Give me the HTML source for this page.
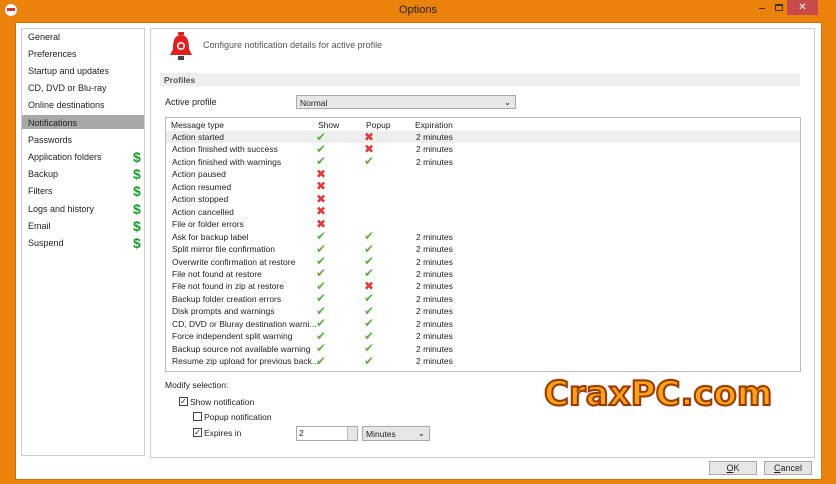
<!DOCTYPE html>
<html><head><meta charset="utf-8"><style>
*{margin:0;padding:0;box-sizing:border-box}
body{width:836px;height:484px;background:#ea820c;font-family:"Liberation Sans","DejaVu Sans",sans-serif;font-size:9px;color:#222;position:relative;overflow:hidden}
.abs{position:absolute}
.title{left:0;top:4px;width:836px;text-align:center;font-size:11px;color:#222}
.client{left:15px;top:22px;width:807px;height:458px;background:#fff;border:1px solid #d26f00}
.left{left:21px;top:28px;width:124px;height:428px;border:1px solid #ccc;background:#fff}
.left div{position:absolute;left:6px;font-size:9px}
.right{left:150px;top:28px;width:665px;height:430px;border:1px solid #ccc;background:#fff}
.left .dollar{color:#1a9a2a;font-weight:bold!important;font-size:14px!important;position:absolute;left:111px!important}
.row{position:absolute;left:172px;font-size:8.5px}
.ck{position:absolute;font-size:12px;color:#5ab33c;font-weight:bold}
.x{position:absolute;font-size:12px;color:#e03a3a;font-weight:bold}
.exp{position:absolute;left:416px;font-size:8.5px}
.cb{position:absolute;width:9px;height:9px;border:1px solid #444;background:#fff;font-size:8px;line-height:8px;text-align:center}
.btn{position:absolute;height:14px;border:1px solid #aaa;background:#e6e6e6;text-align:center;font-size:9px;line-height:12px}
</style></head><body>
<div class="abs" style="left:5px;top:4px;width:12px;height:12px;border-radius:6px;background:#fff"></div>
<div class="abs" style="left:7px;top:8px;width:8px;height:3px;background:#d33"></div>
<div class="abs title">Options</div>
<div class="abs" style="left:759px;top:8px;width:6px;height:1px;background:#333"></div>
<div class="abs" style="left:775px;top:4px;width:8px;height:7px;border:1px solid #333;border-top-width:2px"></div>
<div class="abs" style="left:787px;top:0;width:31px;height:15px;background:#c94a4a;color:#fff;text-align:center;font-size:10px;line-height:15px">✕</div>
<div class="abs client"></div>
<div class="abs left">
<div style="top:3px">General</div><div style="top:20px">Preferences</div><div style="top:37px">Startup and updates</div><div style="top:54px">CD, DVD or Blu-ray</div><div style="top:71px">Online destinations</div>
<div style="top:86px;left:0;width:122px;height:14px;background:#a8a8a8"></div>
<div style="top:89px">Notifications</div>
<div style="top:106px">Passwords</div><div style="top:123px">Application folders</div><div style="top:140px">Backup</div><div style="top:157px">Filters</div><div style="top:175px">Logs and history</div><div style="top:192px">Email</div><div style="top:209px">Suspend</div>
<div class="dollar" style="top:120px">$</div><div class="dollar" style="top:137px">$</div><div class="dollar" style="top:154px">$</div><div class="dollar" style="top:172px">$</div><div class="dollar" style="top:189px">$</div><div class="dollar" style="top:206px">$</div>
</div>
<div class="abs right"></div>
<svg class="abs" style="left:167px;top:32px" width="28" height="30"><rect x="11" y="0" width="6" height="3" fill="#d22"/><path d="M14 3 C7 3 6 10 6 17 L3 23 L25 23 L22 17 C22 10 21 3 14 3Z" fill="#e02020"/><circle cx="14" cy="14" r="4" fill="#fff"/><circle cx="14" cy="14" r="2.5" fill="#e02020"/><rect x="11" y="24" width="6" height="4" fill="#444"/></svg>
<div class="abs" style="left:203px;top:40px;font-size:9px;color:#555">Configure notification details for active profile</div>
<div class="abs" style="left:160px;top:73px;width:640px;height:13px;background:#eeeeee"></div>
<div class="abs" style="left:164px;top:75px;font-size:8.5px;font-weight:bold;color:#555">Profiles</div>
<div class="abs" style="left:165px;top:97px">Active profile</div>
<div class="abs" style="left:296px;top:95px;width:220px;height:14px;border:1px solid #aaa;background:#e8e8e8;padding:2px 3px;font-size:8.5px">Normal<span style="position:absolute;right:4px;top:1px">⌄</span></div>
<div class="abs" style="left:165px;top:117px;width:636px;height:255px;border:1px solid #bbb;background:#fff"></div>
<div class="abs" style="left:166px;top:131px;width:634px;height:12px;background:#eeeeee"></div>
<div class="abs" style="left:171px;top:120px;font-size:8.5px">Message type</div>
<div class="abs" style="left:318px;top:120px;font-size:8.5px">Show</div>
<div class="abs" style="left:366px;top:120px;font-size:8.5px">Popup</div>
<div class="abs" style="left:415px;top:120px;font-size:8.5px">Expiration</div>
<div id="rows"></div>
<script>
var R=[["Action started",1,0,1],["Action finished with success",1,0,1],["Action finished with warnings",1,1,1],["Action paused",0,-1,0],["Action resumed",0,-1,0],["Action stopped",0,-1,0],["Action cancelled",0,-1,0],["File or folder errors",0,-1,0],["Ask for backup label",1,1,1],["Split mirror file confirmation",1,1,1],["Overwrite confirmation at restore",1,1,1],["File not found at restore",1,1,1],["File not found in zip at restore",1,0,1],["Backup folder creation errors",1,1,1],["Disk prompts and warnings",1,1,1],["CD, DVD or Bluray destination warni...",1,1,1],["Force independent split warning",1,1,1],["Backup source not available warning",1,1,1],["Resume zip upload for previous back...",1,1,1]];
var h="";R.forEach(function(r,i){var y=132+i*12.45;h+='<div class="row" style="top:'+y+'px">'+r[0]+'</div>';
h+=r[1]?'<div class="ck" style="left:316px;top:'+(y-2.5)+'px">✔</div>':'<div class="x" style="left:316px;top:'+(y-2.5)+'px">✖</div>';
if(r[2]>=0)h+=r[2]?'<div class="ck" style="left:364px;top:'+(y-2.5)+'px">✔</div>':'<div class="x" style="left:364px;top:'+(y-2.5)+'px">✖</div>';
if(r[3])h+='<div class="exp" style="top:'+y+'px">2 minutes</div>';});
document.getElementById('rows').innerHTML=h;
</script>
<div class="abs" style="left:165px;top:380px;font-size:8.5px">Modify selection:</div>
<div class="cb" style="left:179px;top:397px">✓</div><div class="abs" style="left:190px;top:397px;font-size:8.5px">Show notification</div>
<div class="cb" style="left:193px;top:412px"></div><div class="abs" style="left:204px;top:412px;font-size:8.5px">Popup notification</div>
<div class="cb" style="left:193px;top:428px">✓</div><div class="abs" style="left:204px;top:428px;font-size:8.5px">Expires in</div>
<div class="abs" style="left:296px;top:426px;width:62px;height:15px;border:1px solid #aaa;background:#fff;padding:1px 2px;font-size:8.5px">2</div>
<div class="abs" style="left:347px;top:427px;width:10px;height:13px;background:#e6e6e6;border-left:1px solid #bbb"></div>
<div class="abs" style="left:362px;top:426px;width:68px;height:15px;border:1px solid #aaa;background:#e6e6e6;padding:2px 3px;font-size:8.5px">Minutes<span style="position:absolute;right:4px;top:1px">⌄</span></div>
<div class="abs" style="left:544px;top:374px;font-family:'DejaVu Sans',sans-serif;font-weight:bold;font-size:34px;color:#f7a21a;-webkit-text-stroke:2px #9a3a00;text-shadow:0 0 2px #c04000;white-space:nowrap">CraxPC.com</div>
<div class="btn" style="left:709px;top:461px;width:48px"><u>O</u>K</div>
<div class="btn" style="left:764px;top:461px;width:48px"><u>C</u>ancel</div>
</body></html>
